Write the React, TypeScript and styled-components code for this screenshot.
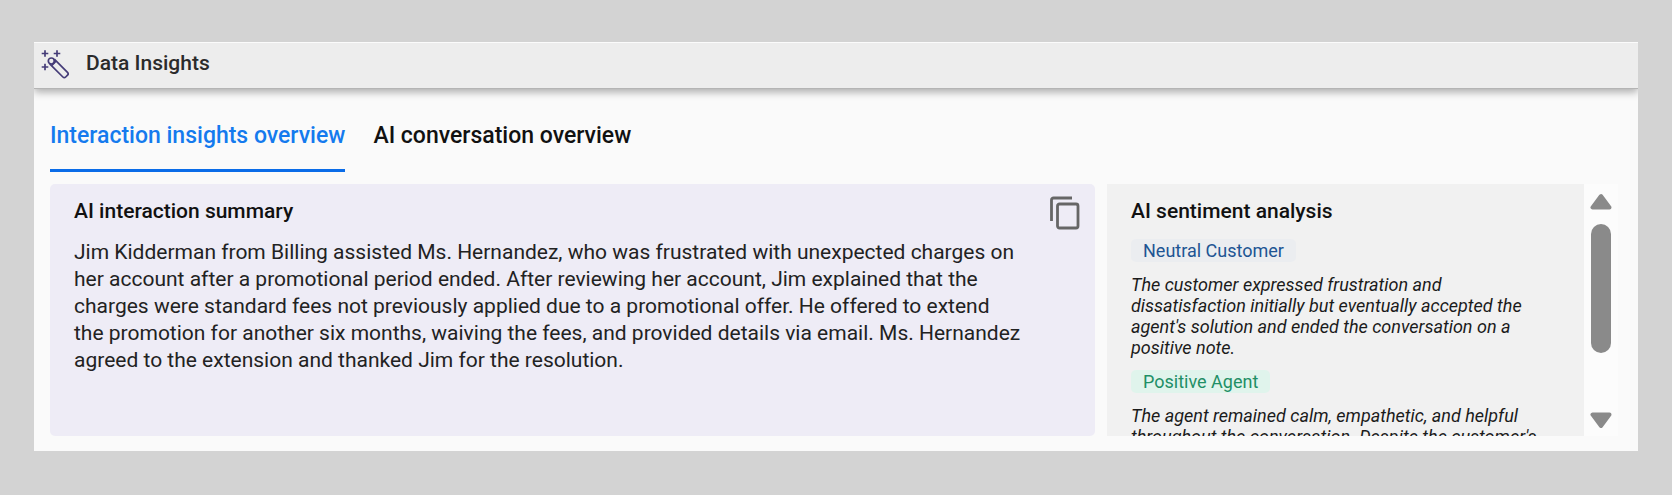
import React, { useRef } from "react";
import styled, { createGlobalStyle } from "styled-components";

const Global = createGlobalStyle`
  *, *::before, *::after { box-sizing: border-box; }
  body {
    margin: 0;
    background: #d3d3d3;
    font-family: Roboto, "Liberation Sans", sans-serif;
    color: #1b1b1b;
  }
  button { font: inherit; color: inherit; border: 0; padding: 0; background: none; cursor: pointer; }
  h1, h2, p { margin: 0; }
`;

const Page = styled.main`
  padding: 42px 34px 44px;
`;

const Widget = styled.section`
  background: #fafafa;
`;

const Header = styled.header`
  display: flex;
  align-items: flex-start;
  gap: 17px;
  height: 47px;
  padding: 7px 7px 0;
  background: #ededed;
  border-top: 1px solid #fbfbfb;
  border-bottom: 1px solid #b4b4b4;
  box-shadow: 0 3px 8px rgba(0, 0, 0, 0.32);
  clip-path: inset(0 0 -16px 0);
`;

const Title = styled.h1`
  font-size: 21px;
  line-height: 26px;
  font-weight: 500;
  color: #2b2b2b;
`;

const Body = styled.div`
  padding: 34px 20px 15px 16px;
`;

const TabList = styled.div`
  display: flex;
  gap: 28px;
  margin-bottom: 12px;
`;

const Tab = styled.button<{ $active?: boolean }>`
  padding-bottom: 20px;
  border-bottom: 3px solid ${(p) => (p.$active ? "#0a6ce8" : "transparent")};
  font-size: 23px;
  line-height: 26px;
  font-weight: 500;
  white-space: nowrap;
  color: ${(p) => (p.$active ? "#147aee" : "#111")};
`;

const Panels = styled.div`
  display: grid;
  grid-template-columns: minmax(0, 1045fr) minmax(0, 511fr);
  gap: 12px;
  height: 252px;
`;

const Summary = styled.article`
  display: flex;
  align-items: flex-start;
  justify-content: space-between;
  padding: 12px 14px 12px 24px;
  border-radius: 5px;
  background: #eeecf6;
`;

const SummaryText = styled.div`
  flex: 0 1 948px;
  padding-top: 3px;
`;

const PanelTitle = styled.h2`
  margin-bottom: 16px;
  font-size: 21px;
  line-height: 24px;
  font-weight: 500;
  color: #111;
`;

const Copy = styled.p`
  font-size: 21px;
  line-height: 27px;
  color: #222;
`;

const IconButton = styled.button`
  display: flex;
`;

const Sentiment = styled.article`
  display: flex;
  min-height: 0;
`;

const SentimentScroll = styled.div`
  flex: 1;
  padding: 15px 24px 0;
  overflow-y: auto;
  scrollbar-width: none;
  background: #f1f1f1;
`;

const Tag = styled.span<{ $tone: "neutral" | "positive" }>`
  display: block;
  width: fit-content;
  padding: 0 12px;
  border-radius: 5px;
  font-size: 18px;
  line-height: 23px;
  color: ${(p) => (p.$tone === "neutral" ? "#205493" : "#1f8f66")};
  background: ${(p) => (p.$tone === "neutral" ? "#ebedf0" : "#e0f4ec")};
`;

const Note = styled.p`
  margin: 12px 0;
  font-size: 18px;
  line-height: 21px;
  font-style: italic;
  color: #1b1b1b;
`;

const ScrollBar = styled.div`
  display: flex;
  flex-direction: column;
  align-items: center;
  width: 34px;
  padding: 9px 0 7px;
  background: #fcfcfc;
`;

const Track = styled.div`
  flex: 1;
  padding: 14px 0;
`;

const Thumb = styled.div`
  width: 20px;
  height: 129px;
  border-radius: 10px;
  background: #8a8a8a;
`;

const WandIcon = () => (
  <svg width="28" height="30" viewBox="0 0 28 30" fill="none" stroke="#453c78" strokeWidth="1.7" aria-hidden="true">
    <path d="M4 .2v6.600M.7 3.500h6.600M16 .2v6.600M12.700 3.500h6.600M4 13.700v6.600M.7 17h6.600" />
    <circle cx="10.300" cy="11" r="3" />
    <path d="M8.700 13.800 21.900 27a2 2 0 0 0 2.800 0l1.800-1.800a2 2 0 0 0 0-2.800L13.300 9.200M10.800 15.400l4.200-4.200" />
  </svg>
);

const CopyIcon = () => (
  <svg width="32" height="36" viewBox="0 0 32 36" fill="none" stroke="#666" strokeWidth="2.800" aria-hidden="true">
    <path d="M2.500 25V4a2 2 0 0 1 2-2H23" />
    <rect x="8.500" y="8" width="20.500" height="24" rx="2" />
  </svg>
);

const Arrow = ({ down }: { down?: boolean }) => (
  <svg width="22" height="17" viewBox="0 0 22 17" fill="#8a8a8a" stroke="#8a8a8a" strokeWidth="4" strokeLinejoin="round" aria-hidden="true">
    <path d={down ? "M2.500 2.500h17L11 14z" : "M2.500 14.500h17L11 3z"} />
  </svg>
);

export default function App() {
  const scroller = useRef<HTMLDivElement>(null);
  const scroll = (top: number) => scroller.current?.scrollBy({ top });

  return (
    <Page>
      <Global />
      <Widget>
        <Header>
          <WandIcon />
          <Title>Data Insights</Title>
        </Header>
        <Body>
          <TabList role="tablist">
            <Tab role="tab" aria-selected="true" $active>Interaction insights overview</Tab>
            <Tab role="tab" aria-selected="false">AI conversation overview</Tab>
          </TabList>
          <Panels>
            <Summary>
              <SummaryText>
                <PanelTitle>AI interaction summary</PanelTitle>
                <Copy>
                  Jim Kidderman from Billing assisted Ms. Hernandez, who was frustrated with unexpected
                  charges on her account after a promotional period ended. After reviewing her account,
                  Jim explained that the charges were standard fees not previously applied due to a
                  promotional offer. He offered to extend the promotion for another six months, waiving
                  the fees, and provided details via email. Ms. Hernandez agreed to the extension and
                  thanked Jim for the resolution.
                </Copy>
              </SummaryText>
              <IconButton aria-label="Copy summary"><CopyIcon /></IconButton>
            </Summary>
            <Sentiment>
              <SentimentScroll ref={scroller}>
                <PanelTitle>AI sentiment analysis</PanelTitle>
                <Tag $tone="neutral">Neutral Customer</Tag>
                <Note>
                  The customer expressed frustration and dissatisfaction initially but eventually
                  accepted the agent's solution and ended the conversation on a positive note.
                </Note>
                <Tag $tone="positive">Positive Agent</Tag>
                <Note>
                  The agent remained calm, empathetic, and helpful throughout the conversation. Despite
                  the customer's
                </Note>
              </SentimentScroll>
              <ScrollBar>
                <IconButton aria-label="Scroll up" onClick={() => scroll(-40)}><Arrow /></IconButton>
                <Track><Thumb /></Track>
                <IconButton aria-label="Scroll down" onClick={() => scroll(40)}><Arrow down /></IconButton>
              </ScrollBar>
            </Sentiment>
          </Panels>
        </Body>
      </Widget>
    </Page>
  );
}
